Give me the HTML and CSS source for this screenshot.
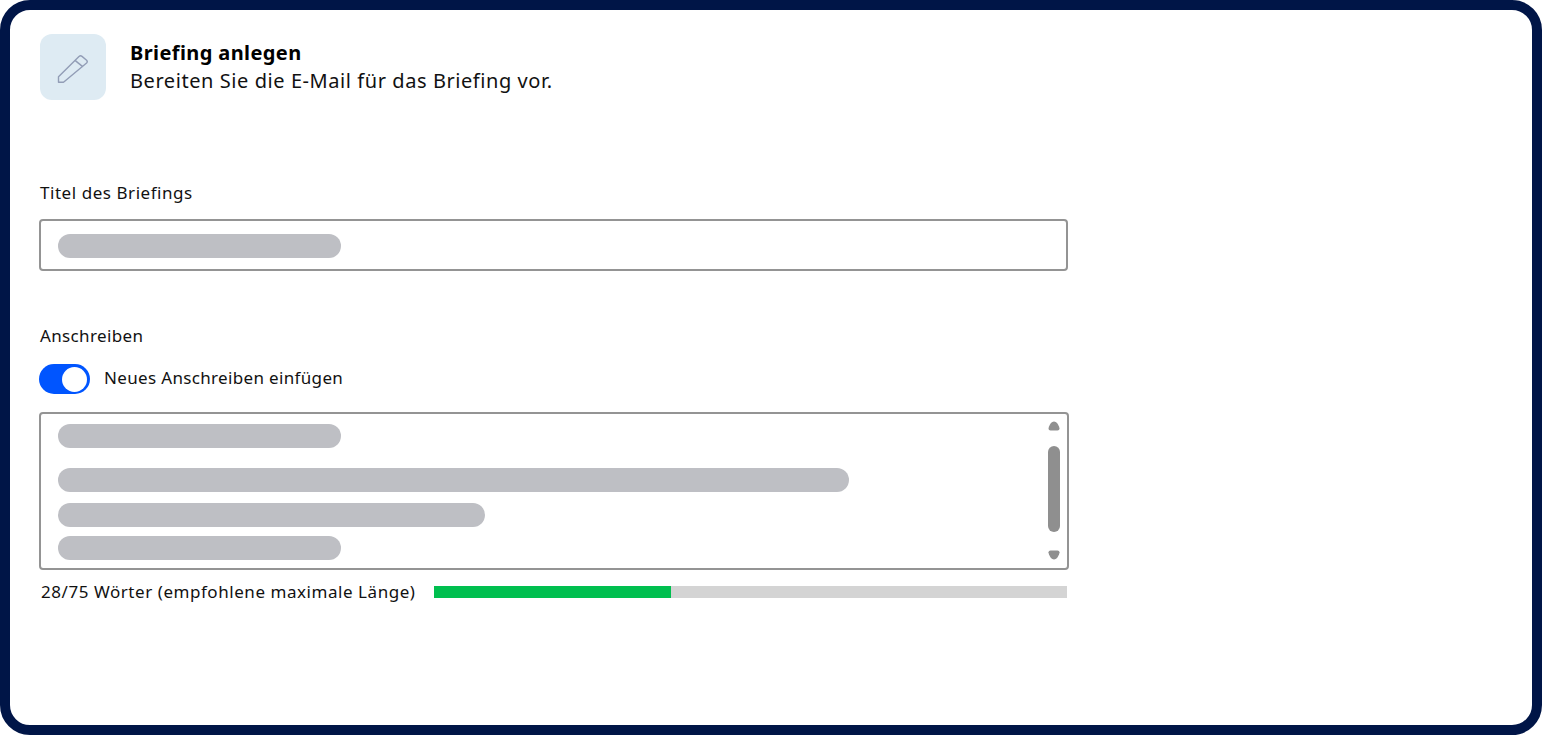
FILE: index.html
```html
<!DOCTYPE html>
<html lang="de">
<head>
    <meta charset="UTF-8">
    <title>Briefing anlegen</title>
    <link rel="stylesheet" href="styles.css">
</head>
<body>
    <div class="frame">
        <header class="head">
            <div class="headIcon">
                <svg width="32" height="32" viewBox="0 0 32 32" fill="none" stroke="#929db6" stroke-width="1.4" stroke-linejoin="round">
                    <path d="M1.5 25.8 L22 5.5 Q23.5 4.2 25 5.4 L29.6 9.2 Q31 10.6 29.6 12 L6.5 31.2 L1.5 31.2 Z"/>
                    <path d="M18 9.4 L25.7 15.6"/>
                </svg>
            </div>
            <div>
                <h1 class="headTitle">Briefing anlegen</h1>
                <p class="headText">Bereiten Sie die E-Mail für das Briefing vor.</p>
            </div>
        </header>

        <label class="fieldLabel titleLabel">Titel des Briefings</label>
        <div class="inputBox">
            <div class="pill short"></div>
        </div>

        <label class="fieldLabel letterLabel">Anschreiben</label>
        <div class="toggleRow">
            <span class="toggle"><span class="knob"></span></span>
            <span class="toggleText">Neues Anschreiben einfügen</span>
        </div>

        <div class="textBox">
            <div class="lines">
                <div class="pill short"></div>
                <div class="pill long lineTwo"></div>
                <div class="pill middle lineThree"></div>
                <div class="pill short lineFour"></div>
            </div>
            <div class="scroll">
                <svg width="12" height="10" viewBox="0 0 12 10"><path d="M6 .5 C8.5 .5 10 3 11 5.5 Q12.5 9.5 9.5 9.5 L2.5 9.5 Q-.5 9.5 1 5.5 C2 3 3.5 .5 6 .5 Z" fill="#8f8f8f"/></svg>
                <div class="thumb"></div>
                <svg width="12" height="10" viewBox="0 0 12 10"><path d="M6 9.5 C3.5 9.5 2 7 1 4.5 Q-.5 .5 2.5 .5 L9.5 .5 Q12.5 .5 11 4.5 C10 7 8.5 9.5 6 9.5 Z" fill="#8f8f8f"/></svg>
            </div>
        </div>

        <div class="wordRow">
            <span class="wordText">28/75 Wörter (empfohlene maximale Länge)</span>
            <div class="bar"><div class="barFill" style="width: 37.4%"></div></div>
        </div>
    </div>
</body>
</html>
```

FILE: styles.css
```css
* {
    box-sizing: border-box;
}

html, body {
    margin: 0;
    height: 100%;
    background-color: #fff;
}

body {
    font-family: "Noto Sans", "Liberation Sans", sans-serif;
    color: #111;
    overflow: hidden;
}

.frame {
    height: 735px;
    padding: 24px 30px;
    border: 10px solid #001547;
    border-radius: 30px;
    background-color: #fff;
}

.head {
    display: flex;
    gap: 24px;
}

.headIcon {
    display: flex;
    align-items: center;
    justify-content: center;
    width: 66px;
    height: 66px;
    background-color: #deebf3;
    border-radius: 12px;
}

.headTitle {
    margin: 5px 0 0;
    font-size: 20px;
    line-height: 28px;
    font-weight: 700;
    letter-spacing: 0.4px;
    color: #000;
}

.headText {
    margin: 0;
    font-size: 20px;
    line-height: 27px;
    letter-spacing: 0.57px;
}

.fieldLabel {
    display: block;
    font-size: 17px;
    line-height: 22px;
}

.titleLabel {
    margin-top: 82px;
    letter-spacing: 0.55px;
}

.letterLabel {
    margin-top: 54px;
    letter-spacing: 0.35px;
}

.inputBox {
    width: 1029px;
    height: 52px;
    margin: 15px 0 0 -1px;
    padding: 13px 17px;
    border: 2px solid #949494;
    border-radius: 4px;
}

.pill {
    height: 24px;
    background-color: #bebfc4;
    border-radius: 12px;
}

.short {
    width: 283px;
}

.middle {
    width: 427px;
}

.long {
    width: 791px;
}

.toggleRow {
    display: flex;
    align-items: center;
    gap: 14px;
    margin: 17px 0 0 -1px;
}

.toggle {
    display: flex;
    justify-content: flex-end;
    align-items: center;
    width: 51px;
    height: 30px;
    padding: 0 3px;
    background-color: #0055ff;
    border-radius: 15px;
}

.knob {
    width: 25px;
    height: 25px;
    background-color: #fff;
    border-radius: 50%;
}

.toggleText {
    margin-bottom: 4px;
    font-size: 17px;
    letter-spacing: 0.34px;
}

.textBox {
    display: flex;
    justify-content: space-between;
    width: 1030px;
    height: 158px;
    margin: 18px 0 0 -1px;
    padding: 10px 7px 8px 17px;
    border: 2px solid #949494;
    border-radius: 4px;
}

.lineTwo {
    margin-top: 20px;
}

.lineThree {
    margin-top: 11px;
}

.lineFour {
    margin-top: 9px;
}

.scroll {
    display: flex;
    flex-direction: column;
    align-items: center;
    width: 12px;
    margin-top: -3px;
}

.thumb {
    flex: none;
    width: 12px;
    height: 86px;
    margin: 15px 0 18px;
    background-color: #8f8f8f;
    border-radius: 6px;
}

.wordRow {
    display: flex;
    align-items: center;
    gap: 19px;
    margin-top: 11px;
}

.wordText {
    margin-left: 1px;
    font-size: 17px;
    line-height: 22px;
    letter-spacing: 0.55px;
    white-space: nowrap;
}

.bar {
    width: 633px;
    height: 12px;
    background-color: #d4d4d4;
}

.barFill {
    height: 100%;
    background-color: #00bf4f;
}
```
